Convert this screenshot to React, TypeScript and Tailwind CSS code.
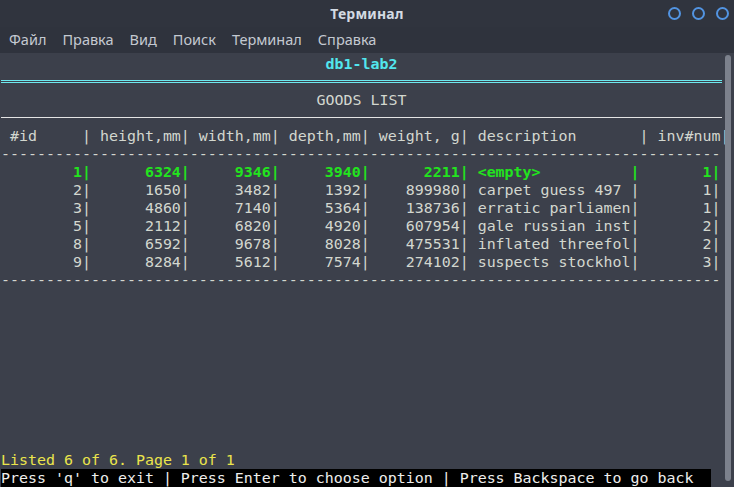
const MONO = "font-['DejaVu_Sans_Mono',monospace]";

type Item = [number, number, number, number, number, string, number];

const items: Item[] = [
  [1, 6324, 9346, 3940, 2211, "<empty>", 1],
  [2, 1650, 3482, 1392, 899980, "carpet guess 497", 1],
  [3, 4860, 7140, 5364, 138736, "erratic parliamen", 1],
  [5, 2112, 6820, 4920, 607954, "gale russian inst", 2],
  [8, 6592, 9678, 8028, 475531, "inflated threefol", 2],
  [9, 8284, 5612, 7574, 274102, "suspects stockhol", 3],
];

const pad = (v: number, n: number) => String(v).padStart(n, " ");

// one 80-column line per record, same widths as the header below
function formatRow([id, h, w, d, wt, desc, inv]: Item) {
  return (
    pad(id, 9) + "|" + pad(h, 10) + "|" + pad(w, 9) + "|" + pad(d, 9) + "|" +
    pad(wt, 10) + "| " + desc.padEnd(17, " ") + "|" + pad(inv, 8) + "|"
  );
}

const HEADER =
  " #id     | height,mm| width,mm| depth,mm| weight, g| description       | inv#num|";
const DASHES = "-".repeat(80);
const MENU = ["Файл", "Правка", "Вид", "Поиск", "Терминал", "Справка"];

function Line({ children, className = "" }: { children?: React.ReactNode; className?: string }) {
  return <div className={`h-[18px] leading-[18px] whitespace-pre ${className}`}>{children}</div>;
}

export default function App() {
  return (
    <div className="w-[734px] h-[487px] flex flex-col bg-[#3c404b] overflow-hidden font-['Noto_Sans',sans-serif]">
      {/* title bar */}
      <div className="h-[27px] shrink-0 grid grid-cols-[1fr_auto_1fr] items-center bg-[#30343e]">
        <div />
        <div className="text-[14px] font-bold text-[#d3dae3] tracking-[0.2px]">Терминал</div>
        <div className="flex justify-end gap-[11px] pr-[5px]">
          <span className="w-[13px] h-[13px] rounded-full border-2 border-[#5294e2]" />
          <span className="w-[13px] h-[13px] rounded-full border-2 border-[#5294e2]" />
          <span className="w-[13px] h-[13px] rounded-full border-2 border-[#5294e2]" />
        </div>
      </div>

      {/* menu bar */}
      <div className="h-[26px] shrink-0 flex items-center gap-[16px] pl-[9px] bg-[#2f333d] text-[14.5px] text-[#c4c9d1]">
        {MENU.map((m) => (
          <span key={m}>{m}</span>
        ))}
      </div>

      {/* terminal */}
      <div className="flex-1 flex min-h-0">
        <div className={`w-[722px] pl-[1px] pt-[2px] text-[14.95px] text-[#d3d7cf] ${MONO}`}>
          <Line className="text-center font-bold text-[#52e6ee]">db1-lab2</Line>
          <Line className="pt-[7px]">
            <div className="h-[3px] border-y border-[#6ee9ef]" />
          </Line>
          <Line className="text-center">GOODS LIST</Line>
          <Line className="pt-[8px]">
            <div className="h-px bg-[#e4e4e4]" />
          </Line>
          <Line>{HEADER}</Line>
          <Line>{DASHES}</Line>
          {items.map((it, i) => (
            <Line key={it[0]} className={i === 0 ? "font-bold text-[#22e41e]" : ""}>
              {formatRow(it)}
            </Line>
          ))}
          <Line>{DASHES}</Line>
          <div className="h-[162px]" />
          <Line className="text-[#ebe54c]">Listed 6 of 6. Page 1 of 1</Line>
          <Line>
            <span className="inline-block w-[710px] bg-black text-[#eeeeec]">
              Press 'q' to exit | Press Enter to choose option | Press Backspace to go back
            </span>
          </Line>
        </div>
        <div className="flex-1 flex justify-center pt-[2px] pb-[6px]">
          <div className="w-[6px] h-full rounded-full bg-[#7c818c]" />
        </div>
      </div>
    </div>
  );
}
